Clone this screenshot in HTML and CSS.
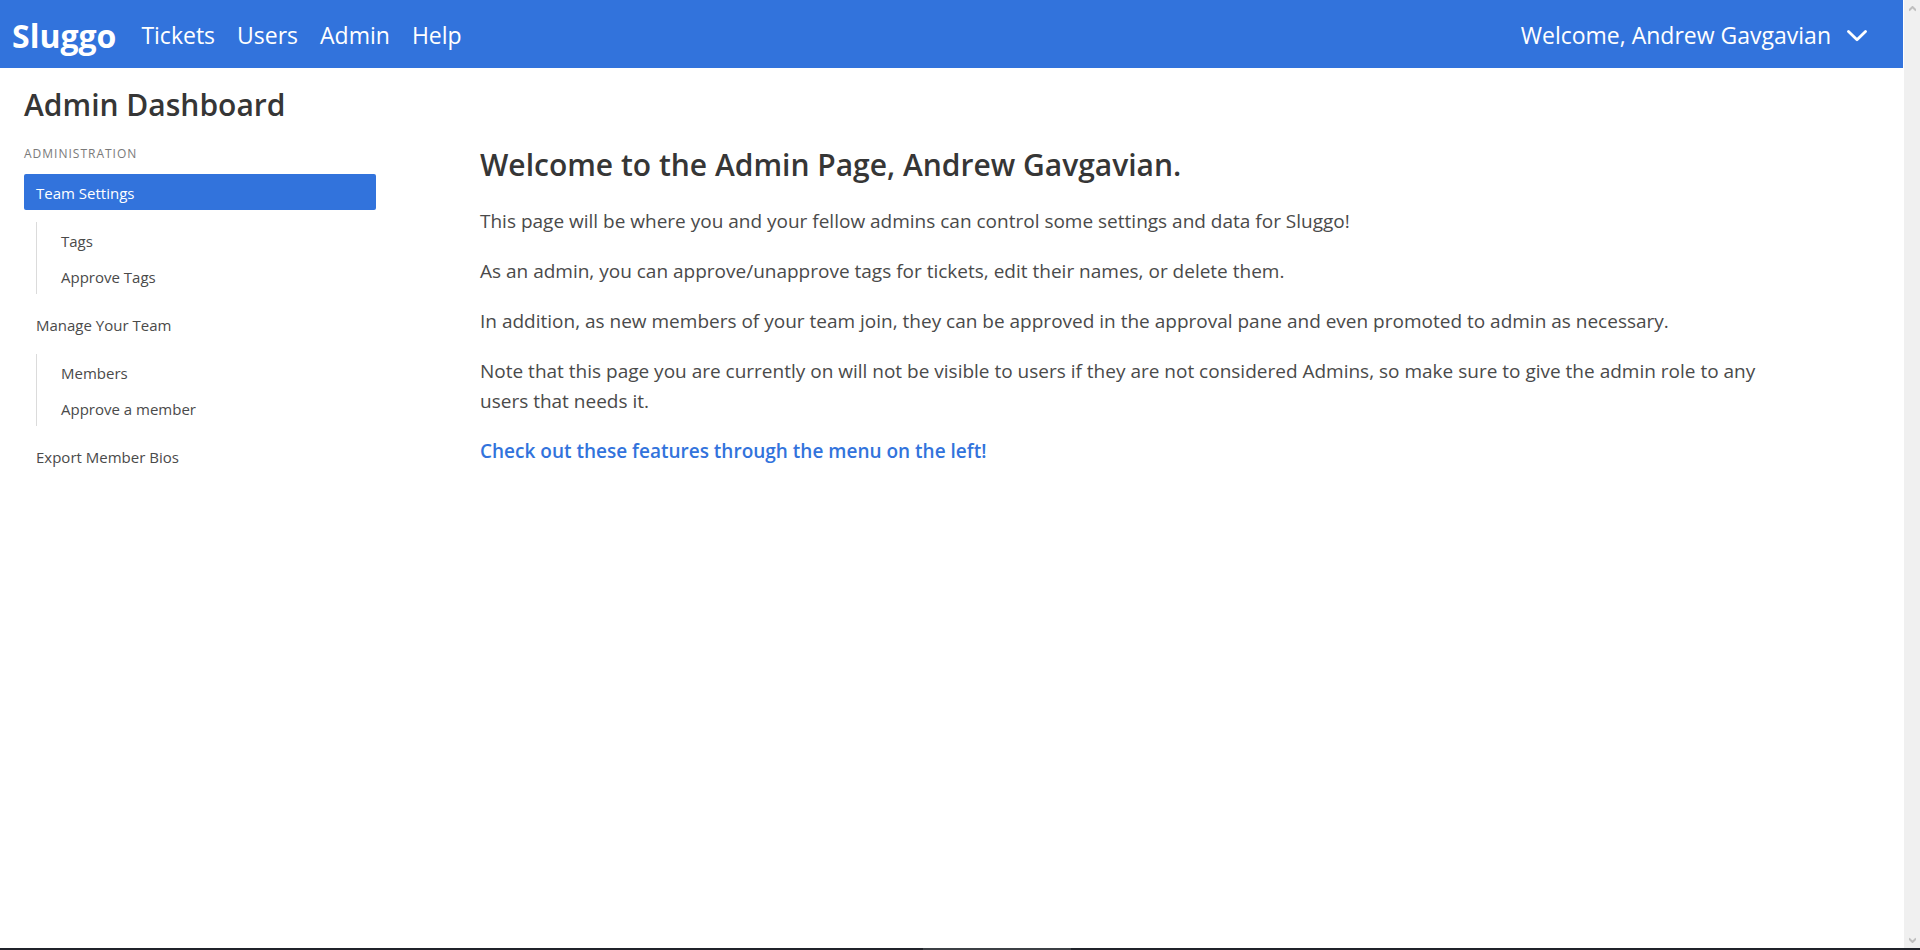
FILE: index.html
```html
<!DOCTYPE html>
<html lang="en">
<head>
<meta charset="utf-8">
<meta name="viewport" content="width=device-width, initial-scale=1">
<title>Sluggo – Admin Dashboard</title>
<link rel="stylesheet" href="styles.css">
</head>
<body>
<div class="window">
  <div class="page">
    <nav class="navbar" aria-label="Main">
      <a class="brand" href="#">Sluggo</a>
      <a class="navbar-item" href="#">Tickets</a>
      <a class="navbar-item" href="#">Users</a>
      <a class="navbar-item" href="#">Admin</a>
      <a class="navbar-item" href="#">Help</a>
      <button class="account" type="button" aria-haspopup="true">Welcome, Andrew Gavgavian
        <svg class="account-arrow" viewBox="0 0 20 12" aria-hidden="true"><path d="M1.5 1.500 10 9.800l8.500-8.300"/></svg>
      </button>
    </nav>
    <h1 class="page-title">Admin Dashboard</h1>
    <div class="columns">
      <aside class="menu">
        <p class="menu-label">Administration</p>
        <ul class="menu-list">
          <li><a class="menu-link is-active" href="#">Team Settings</a>
            <ul class="submenu">
              <li><a class="menu-link" href="#">Tags</a></li>
              <li><a class="menu-link" href="#">Approve Tags</a></li>
            </ul>
          </li>
          <li><a class="menu-link" href="#">Manage Your Team</a>
            <ul class="submenu">
              <li><a class="menu-link" href="#">Members</a></li>
              <li><a class="menu-link" href="#">Approve a member</a></li>
            </ul>
          </li>
          <li><a class="menu-link" href="#">Export Member Bios</a></li>
        </ul>
      </aside>
      <main class="content">
        <h2 class="content-title">Welcome to the Admin Page, Andrew Gavgavian.</h2>
        <p>This page will be where you and your fellow admins can control some settings and data for Sluggo!</p>
        <p>As an admin, you can approve/unapprove tags for tickets, edit their names, or delete them.</p>
        <p>In addition, as new members of your team join, they can be approved in the approval pane and even promoted to admin as necessary.</p>
        <p>Note that this page you are currently on will not be visible to users if they are not considered Admins, so make sure to give the admin role to any users that needs it.</p>
        <p class="highlight">Check out these features through the menu on the left!</p>
      </main>
    </div>
  </div>
  <div class="scrollbar" aria-hidden="true">
    <svg class="scroll-arrow" viewBox="0 0 7 6"><path d="M0 4.500 3.500 1 7 4.500"/></svg>
    <svg class="scroll-arrow" viewBox="0 0 7 6"><path d="M0 1.500 3.500 5 7 1.500"/></svg>
  </div>
</div>
<div class="taskbar" aria-hidden="true"><span class="taskbar-active"></span></div>
</body>
</html>
```
FILE: styles.css
```css
* {
  box-sizing: border-box;
}

body {
  display: flex;
  flex-direction: column;
  min-height: 100vh;
  margin: 0;
  background: #fff;
  color: #4a4a4a;
  font-family: "Segoe UI", "Open Sans", "Noto Sans", sans-serif;
  font-size: 15px;
}

a {
  color: inherit;
  text-decoration: none;
}

ul {
  margin: 0;
  padding: 0;
  list-style: none;
}

.window {
  display: flex;
  flex: 1;
}

.page {
  flex: 1;
  min-width: 0;
}

.navbar {
  display: flex;
  align-items: center;
  min-height: 68px;
  padding: 2px 36px 0 12px;
  background: #3273dc;
  color: #fff;
  font-size: 23px;
  line-height: 36px;
}

.brand {
  margin-right: 14px;
  padding-top: 2px;
  font-size: 32px;
  font-weight: 700;
}

.navbar-item {
  padding: 0 11px;
}

.account {
  display: flex;
  align-items: center;
  gap: 16px;
  margin-left: auto;
  padding: 0;
  border: 0;
  background: none;
  color: inherit;
  font: inherit;
}

.account-arrow {
  width: 20px;
  height: 12px;
  margin-top: 2px;
  fill: none;
  stroke: currentColor;
  stroke-width: 2.800;
  stroke-linecap: round;
  stroke-linejoin: round;
}

.page-title,
.content-title {
  margin: 0;
  color: #363636;
  font-size: 30px;
  font-weight: 600;
  line-height: 36px;
}

.page-title {
  padding: 19px 24px 0;
}

.columns {
  display: grid;
  grid-template-columns: 352fr 1304fr;
  gap: 104px;
  padding: 22px 119px 24px 24px;
}

.menu-label {
  margin: 0 0 11px;
  color: #7a7a7a;
  font-size: 12px;
  line-height: 18px;
  letter-spacing: 1px;
  text-transform: uppercase;
}

.menu-link {
  display: block;
  padding: 9px 12px 7px;
  border-radius: 2px;
  line-height: 20px;
}

.menu-link.is-active {
  background: #3273dc;
  color: #fff;
}

.submenu {
  margin: 12px;
  padding-left: 12px;
  border-left: 1px solid #dbdbdb;
}

.content {
  font-size: 19px;
  line-height: 30px;
}

.content-title {
  margin: 2px 0 23px;
}

.content p {
  margin: 0 0 20px;
}

.content .highlight {
  color: #3273dc;
  font-weight: 600;
}

.scrollbar {
  display: flex;
  flex-direction: column;
  align-items: center;
  justify-content: space-between;
  width: 17px;
  padding: 6px 0 5px;
  border-left: 1px solid #fff;
  background: #f0f0f0;
}

.scroll-arrow {
  width: 7px;
  height: 6px;
  fill: none;
  stroke: #bfbfbf;
  stroke-width: 2;
}

.taskbar {
  display: flex;
  justify-content: center;
  height: 2px;
  padding-left: 74px;
  background: #20232a;
}

.taskbar-active {
  width: 8%;
  background: #3c4045;
}
```
